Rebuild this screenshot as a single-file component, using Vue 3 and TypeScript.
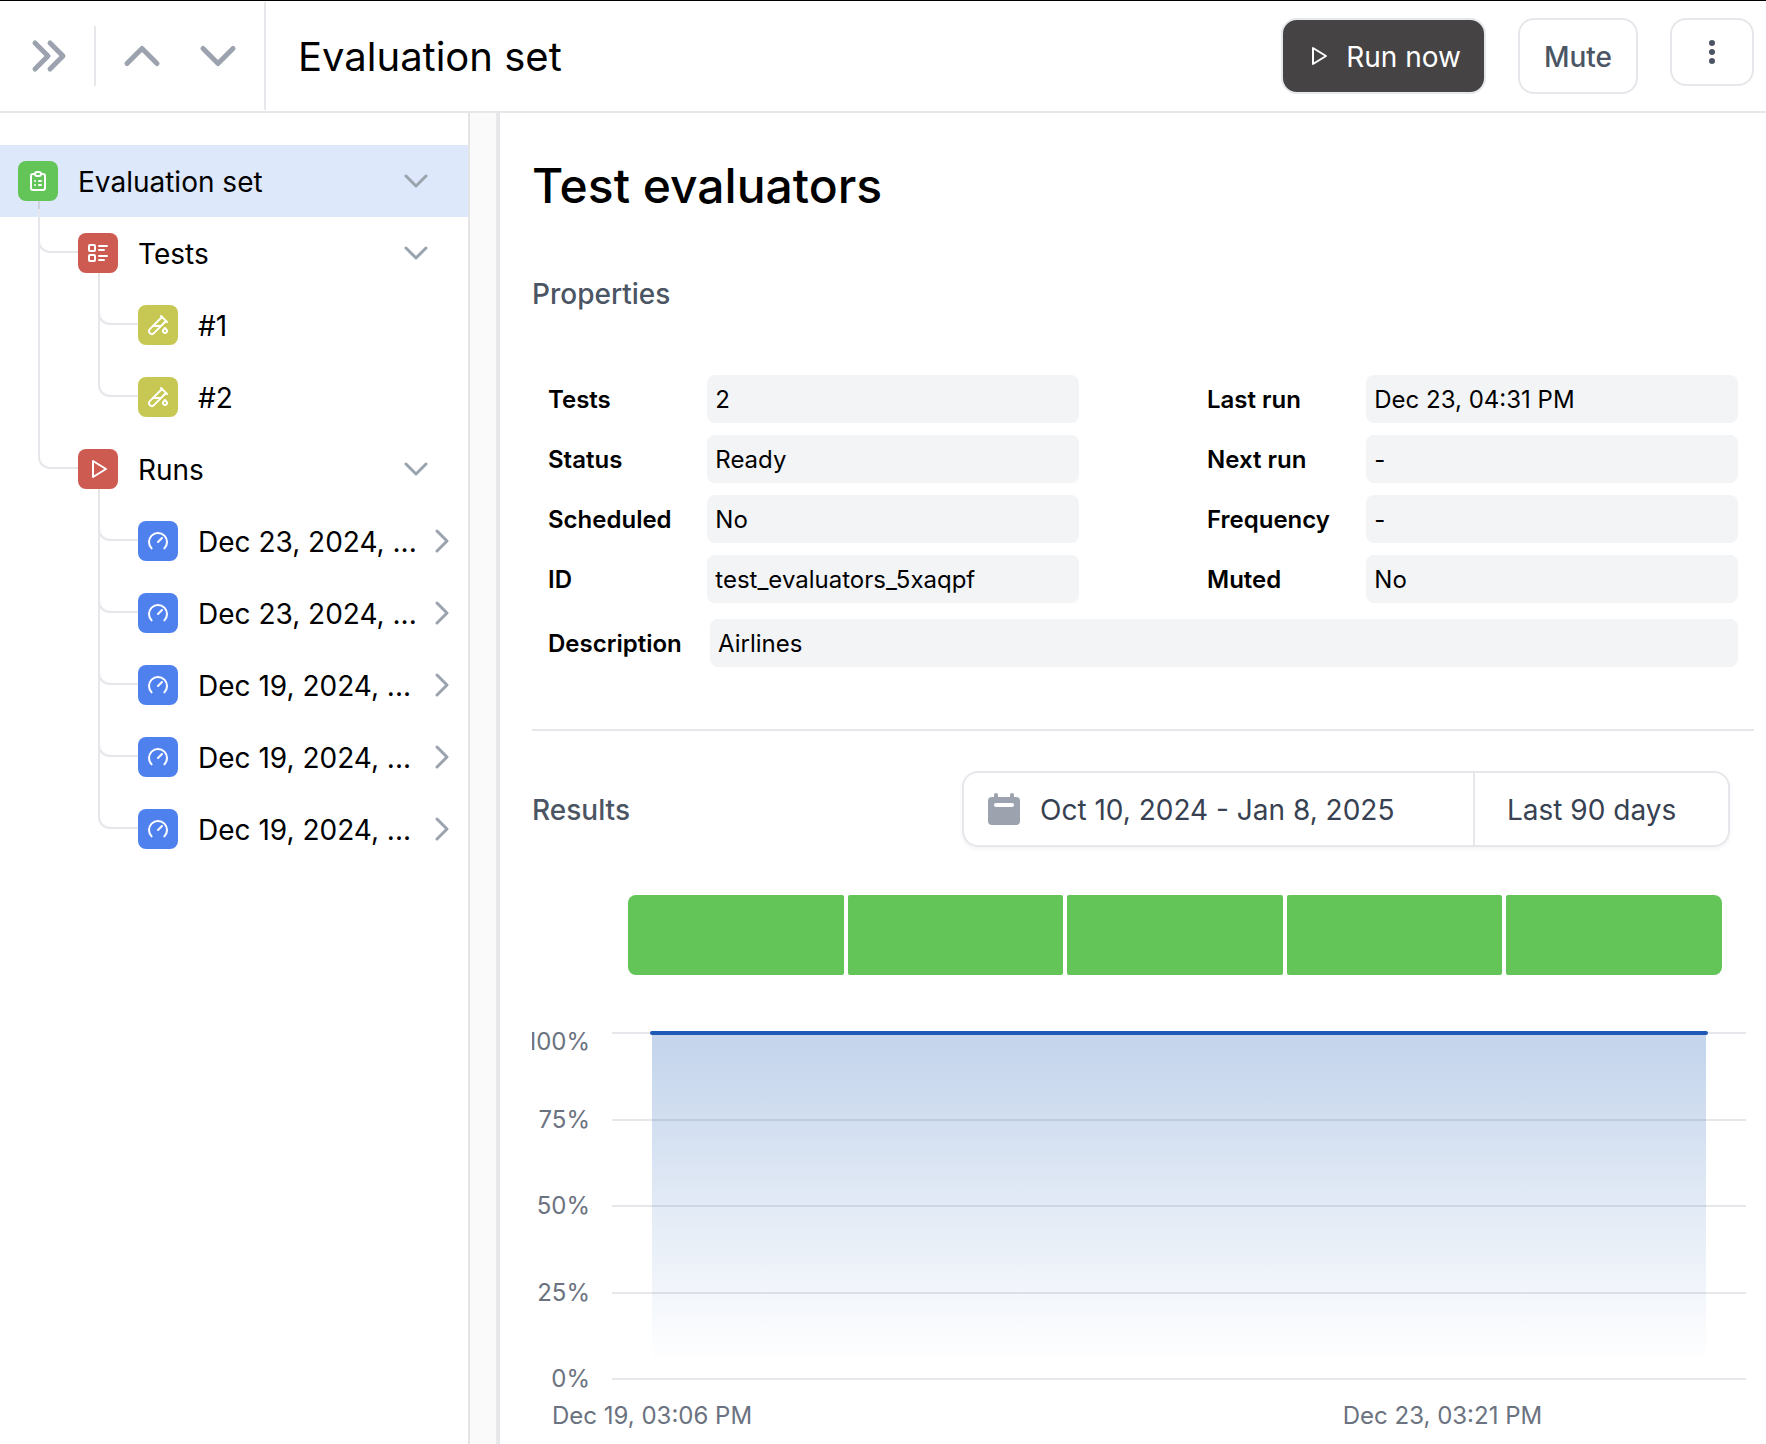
<script setup lang="ts">
type IconName = 'clipboard' | 'list' | 'pipe' | 'play' | 'gauge'

interface TreeNode {
  label: string
  icon: IconName
  level: number
  chevron?: 'down' | 'right'
  last?: boolean
  through?: boolean
  parent?: boolean
}

interface Property {
  label: string
  value: string
}

const icons: Record<IconName, string[]> = {
  clipboard: [
    'M9 5h-2a2 2 0 0 0 -2 2v12a2 2 0 0 0 2 2h10a2 2 0 0 0 2 -2v-12a2 2 0 0 0 -2 -2h-2',
    'M9 5a2 2 0 0 1 2 -2h2a2 2 0 0 1 2 2a2 2 0 0 1 -2 2h-2a2 2 0 0 1 -2 -2z',
    'M9 12h.01',
    'M13 12h2',
    'M9 16h.01',
    'M13 16h2',
  ],
  list: [
    'M13 5h8',
    'M13 9h5',
    'M13 15h8',
    'M13 19h5',
    'M3 5a1 1 0 0 1 1 -1h4a1 1 0 0 1 1 1v4a1 1 0 0 1 -1 1h-4a1 1 0 0 1 -1 -1z',
    'M3 15a1 1 0 0 1 1 -1h4a1 1 0 0 1 1 1v4a1 1 0 0 1 -1 1h-4a1 1 0 0 1 -1 -1z',
  ],
  pipe: [
    'M20 8.04l-12.122 12.124a2.857 2.857 0 1 1 -4.041 -4.04l12.122 -12.124',
    'M7 13h8',
    'M19 15l1.5 1.6a2 2 0 1 1 -3 0l1.5 -1.6z',
    'M15 3l6 6',
  ],
  play: ['M7 4v16l13 -8z'],
  gauge: ['M5.636 19.364a9 9 0 1 1 12.728 0', 'M16 9l-4 4'],
}

const tree: TreeNode[] = [
  { label: 'Evaluation set', icon: 'clipboard', level: 0, chevron: 'down', parent: true },
  { label: 'Tests', icon: 'list', level: 1, chevron: 'down', parent: true },
  { label: '#1', icon: 'pipe', level: 2, through: true },
  { label: '#2', icon: 'pipe', level: 2, through: true, last: true },
  { label: 'Runs', icon: 'play', level: 1, chevron: 'down', last: true, parent: true },
  { label: 'Dec 23, 2024, ...', icon: 'gauge', level: 2, chevron: 'right' },
  { label: 'Dec 23, 2024, ...', icon: 'gauge', level: 2, chevron: 'right' },
  { label: 'Dec 19, 2024, ...', icon: 'gauge', level: 2, chevron: 'right' },
  { label: 'Dec 19, 2024, ...', icon: 'gauge', level: 2, chevron: 'right' },
  { label: 'Dec 19, 2024, ...', icon: 'gauge', level: 2, chevron: 'right', last: true },
]

const columns: Property[][] = [
  [
    { label: 'Tests', value: '2' },
    { label: 'Status', value: 'Ready' },
    { label: 'Scheduled', value: 'No' },
    { label: 'ID', value: 'test_evaluators_5xaqpf' },
  ],
  [
    { label: 'Last run', value: 'Dec 23, 04:31 PM' },
    { label: 'Next run', value: '-' },
    { label: 'Frequency', value: '-' },
    { label: 'Muted', value: 'No' },
  ],
]

const runs = [1, 2, 3, 4, 5]
const yTicks = ['100%', '75%', '50%', '25%', '0%']
const xTicks = ['Dec 19, 03:06 PM', '', '', 'Dec 23, 03:21 PM', '']
</script>

<template>
  <div class="page">
    <header class="topbar">
      <nav class="pager" aria-label="Navigation">
        <button class="icon-btn" type="button" aria-label="Expand">
          <svg width="40" height="40" viewBox="0 0 40 40"><path d="M6 7l13 13l-13 13M21 7l13 13l-13 13" /></svg>
        </button>
        <span class="pager-divider"></span>
        <button class="icon-btn" type="button" aria-label="Previous">
          <svg width="40" height="40" viewBox="0 0 40 40"><path d="M5 27.5l15 -15l15 15" /></svg>
        </button>
        <button class="icon-btn next" type="button" aria-label="Next">
          <svg width="40" height="40" viewBox="0 0 40 40"><path d="M5 12.5l15 15l15 -15" /></svg>
        </button>
      </nav>
      <div class="title">Evaluation set</div>
      <div class="actions">
        <button class="btn primary" type="button">
          <svg class="run-icon" width="24" height="24" viewBox="0 0 24 24"><path d="M7 4v16l13 -8z" /></svg>
          <span class="text">Run now</span>
        </button>
        <button class="btn" type="button"><span class="text">Mute</span></button>
        <button class="btn more" type="button" aria-label="More">
          <svg width="24" height="24" viewBox="0 0 24 24">
            <circle cx="12" cy="3" r="3" />
            <circle cx="12" cy="12" r="3" />
            <circle cx="12" cy="21" r="3" />
          </svg>
        </button>
      </div>
    </header>

    <div class="body">
      <aside class="sidebar">
        <ul class="tree">
          <li
            v-for="(node, i) in tree"
            :key="i"
            class="row"
            :class="['level-' + node.level, { selected: i === 0 }]"
          >
            <span v-if="node.through" class="rail outer"></span>
            <span v-if="node.level > 0 && !node.last" class="rail"></span>
            <span v-if="node.level > 0" class="elbow"></span>
            <span class="badge" :class="node.icon">
              <svg width="24" height="24" viewBox="0 0 24 24">
                <path v-for="d in icons[node.icon]" :key="d" :d="d" />
              </svg>
              <span v-if="node.parent" class="stub"></span>
            </span>
            <a class="label text" href="#">{{ node.label }}</a>
            <button
              v-if="node.chevron"
              class="toggle"
              :class="node.chevron"
              type="button"
              :aria-label="node.chevron === 'down' ? 'Collapse' : 'Expand'"
            >
              <svg width="24" height="24" viewBox="0 0 24 24">
                <path :d="node.chevron === 'down' ? 'M2 7l10 10l10 -10' : 'M7 2l10 10l-10 10'" />
              </svg>
            </button>
          </li>
        </ul>
      </aside>
      <div class="splitter"></div>

      <main class="main">
        <h1>Test evaluators</h1>
        <h2>Properties</h2>
        <section class="properties">
          <div class="columns">
            <dl v-for="(column, c) in columns" :key="c" class="column">
              <div v-for="prop in column" :key="prop.label" class="prop">
                <dt>{{ prop.label }}</dt>
                <dd>{{ prop.value }}</dd>
              </div>
            </dl>
          </div>
          <dl class="prop description">
            <dt>Description</dt>
            <dd>Airlines</dd>
          </dl>
        </section>

        <hr />

        <div class="results-head">
          <h2 class="text">Results</h2>
          <div class="range">
            <button class="dates" type="button">
              <svg width="32" height="32" viewBox="0 0 32 32">
                <rect y="4" width="32" height="28" rx="4" />
                <rect x="6" width="4" height="8" rx="2" />
                <rect x="22" width="4" height="8" rx="2" />
                <rect class="slot" x="6" y="10" width="20" height="4" rx="2" />
              </svg>
              <span class="text">Oct 10, 2024 - Jan 8, 2025</span>
            </button>
            <button class="preset text" type="button">Last 90 days</button>
          </div>
        </div>

        <div class="tracker">
          <span v-for="run in runs" :key="run"></span>
        </div>

        <div class="chart">
          <div class="y-axis">
            <span v-for="tick in yTicks" :key="tick">{{ tick }}</span>
          </div>
          <div class="plot">
            <i v-for="tick in yTicks" :key="tick"></i>
            <div class="area"></div>
            <div class="series"></div>
          </div>
        </div>
        <div class="x-axis">
          <span v-for="(tick, i) in xTicks" :key="i">{{ tick }}</span>
        </div>
      </main>
    </div>
  </div>
</template>

<style>
body {
  margin: 0;
  background: #fff;
}
</style>

<style scoped>
.page {
  display: flex;
  flex-direction: column;
  min-height: 100vh;
  box-sizing: border-box;
  border-top: 1px solid #000;
  font-family: Inter, "Liberation Sans", sans-serif;
  font-size: 28px;
  line-height: 40px;
  color: #000;
}
.page *,
.page *::before {
  box-sizing: border-box;
}
button {
  font: inherit;
  color: inherit;
  background: none;
  border: 0;
  padding: 0;
  margin: 0;
  cursor: pointer;
}
svg {
  display: block;
  flex: none;
}
.text {
  padding-top: 2px;
}

.topbar {
  display: flex;
  height: 112px;
  border-bottom: 2px solid #e5e7eb;
}
.pager {
  display: flex;
  align-items: center;
  margin: 1px 0;
  padding: 0 26px 0 29px;
  border-right: 2px solid #e5e7eb;
}
.pager-divider {
  width: 2px;
  height: 60px;
  margin: 0 26px 0 25px;
  background: #e5e7eb;
}
.icon-btn path {
  fill: none;
  stroke: #9ca3af;
  stroke-width: 5;
  stroke-linecap: round;
  stroke-linejoin: round;
}
.next {
  margin-left: 36px;
}
.title {
  flex: 1;
  align-self: center;
  padding: 2px 0 0 32px;
  font-size: 40px;
}
.actions {
  display: flex;
  align-items: flex-start;
  gap: 32px;
  padding: 17px 12px 0 0;
}
.btn {
  display: flex;
  align-items: center;
  justify-content: center;
  gap: 16px;
  height: 76px;
  padding: 0 24px;
  border: 2px solid #e5e7eb;
  border-radius: 16px;
  background: #fff;
  font-weight: 500;
  color: #4b5563;
}
.primary {
  padding: 0 23px;
  background: #454344;
  color: #fff;
  font-weight: 400;
}
.run-icon path {
  fill: none;
  stroke: #fff;
  stroke-width: 2;
  stroke-linejoin: round;
}
.more {
  width: 84px;
  height: 68px;
}
.more svg {
  fill: #4b5563;
}

.body {
  flex: 1;
  display: flex;
}
.sidebar {
  flex: none;
  width: 470px;
  padding-top: 32px;
  border-right: 2px solid #e5e5e6;
}
.splitter {
  flex: none;
  width: 30px;
  background: #fafafa;
  border-right: 2px solid #e5e6ea;
  box-shadow: inset -2px 0 #e9e9ea;
}
.tree {
  list-style: none;
  margin: 0;
  padding: 0;
}
.row {
  position: relative;
  display: flex;
  align-items: center;
  gap: 20px;
  height: 72px;
  padding-left: 18px;
}
.selected {
  background: #dee8fb;
}
.level-1 {
  padding-left: 78px;
}
.level-2 {
  padding-left: 138px;
}
.rail,
.elbow {
  position: absolute;
  top: 0;
  left: 38px;
}
.rail {
  width: 2px;
  height: 100%;
  background: #e5e7eb;
}
.elbow {
  width: 40px;
  height: 36px;
  border: solid #e5e7eb;
  border-width: 0 0 2px 2px;
  border-bottom-left-radius: 12px;
}
.level-2 .rail,
.level-2 .elbow {
  left: 98px;
}
.level-2 .outer {
  left: 38px;
}
.badge {
  position: relative;
  flex: none;
  display: flex;
  align-items: center;
  justify-content: center;
  width: 40px;
  height: 40px;
  border-radius: 8px;
}
.badge path {
  fill: none;
  stroke: #fff;
  stroke-width: 2;
  stroke-linecap: round;
  stroke-linejoin: round;
}
.badge.clipboard {
  background: #63c458;
}
.badge.list,
.badge.play {
  background: #cd5b51;
}
.badge.pipe {
  background: #c6c853;
}
.badge.gauge {
  background: #4f81ee;
}
.stub {
  position: absolute;
  top: 40px;
  left: 20px;
  width: 2px;
  height: 16px;
  background: #e5e7eb;
}
.selected .stub {
  background: linear-gradient(#ccd3df 50%, #e5e7eb 50%);
}
.label {
  flex: 1;
  min-width: 0;
  white-space: nowrap;
  color: inherit;
  text-decoration: none;
}
.toggle {
  margin-right: 40px;
}
.toggle.right {
  margin-right: 14px;
}
.toggle path {
  fill: none;
  stroke: #9ca3af;
  stroke-width: 3;
  stroke-linecap: round;
  stroke-linejoin: round;
}

.main {
  flex: 1;
  min-width: 0;
  padding: 45px 12px 12px 32px;
}
h1 {
  margin: 0 0 60px;
  font-size: 48px;
  line-height: 56px;
  font-weight: 500;
}
h2 {
  margin: 0;
  font-size: 28px;
  line-height: 40px;
  font-weight: 500;
  color: #4b5563;
}
.properties {
  margin: 61px 16px 0;
  font-size: 24px;
}
.columns {
  display: grid;
  grid-template-columns: 1fr 1fr;
  gap: 128px;
}
.column {
  display: flex;
  flex-direction: column;
  gap: 12px;
  margin: 0;
}
.prop {
  display: grid;
  grid-template-columns: 3fr 7fr;
}
.description {
  grid-template-columns: 162px 1fr;
  margin: 16px 0 0;
}
dt,
dd {
  margin: 0;
  height: 48px;
  line-height: 50px;
  white-space: nowrap;
}
dt {
  font-weight: 600;
}
dd {
  padding: 0 8px;
  border-radius: 8px;
  background: #f3f4f6;
}
hr {
  height: 2px;
  margin: 62px 0 40px;
  border: 0;
  background: #e5e7eb;
}
.results-head {
  display: flex;
  align-items: center;
  justify-content: space-between;
  padding-right: 24px;
}
.range {
  display: flex;
  width: 768px;
  height: 76px;
  border: 2px solid #e5e7eb;
  border-radius: 16px;
  box-shadow: 0 2px 4px rgba(0, 0, 0, 0.05);
  color: #374151;
}
.dates {
  flex: 1;
  display: flex;
  align-items: center;
  gap: 20px;
  padding-left: 24px;
}
.dates svg {
  fill: #9ca3af;
}
.dates .slot {
  fill: #fff;
}
.preset {
  width: 255px;
  padding-left: 32px;
  border-left: 2px solid #e5e7eb;
  text-align: left;
}
.tracker {
  display: flex;
  gap: 4px;
  height: 80px;
  margin: 48px 32px 0 96px;
}
.tracker span {
  flex: 1;
  border-radius: 2px;
  background: #63c458;
}
.tracker span:first-child {
  border-top-left-radius: 8px;
  border-bottom-left-radius: 8px;
}
.tracker span:last-child {
  border-top-right-radius: 8px;
  border-bottom-right-radius: 8px;
}
.chart {
  display: flex;
  gap: 22px;
  height: 348px;
  margin: 57px 8px 0 0;
}
.y-axis {
  display: flex;
  flex-direction: column;
  justify-content: space-between;
  flex: none;
  width: 58px;
  padding: 1px 0;
  overflow-x: clip;
  font-size: 24px;
  line-height: 18px;
  color: #6b7280;
}
.y-axis span {
  display: flex;
  align-items: center;
  justify-content: flex-end;
  height: 0;
}
.y-axis span:first-child {
  align-items: flex-start;
}
.plot {
  position: relative;
  flex: 1;
  display: flex;
  flex-direction: column;
  justify-content: space-between;
}
.plot i {
  height: 2px;
  background: #e5e7eb;
}
.area {
  position: absolute;
  top: 1px;
  bottom: 1px;
  left: 40px;
  right: 40px;
  background: linear-gradient(rgba(32, 95, 182, 0.26) 5%, rgba(32, 105, 182, 0) 95%);
}
.series {
  position: absolute;
  top: -1px;
  left: 38px;
  right: 38px;
  height: 4px;
  border-radius: 2px;
  background: #205ab6;
}
.x-axis {
  display: flex;
  justify-content: space-between;
  margin: 20px 48px 0 120px;
  font-size: 24px;
  line-height: 32px;
  color: #6b7280;
}
.x-axis span {
  display: flex;
  justify-content: center;
  width: 0;
  white-space: nowrap;
}
</style>
